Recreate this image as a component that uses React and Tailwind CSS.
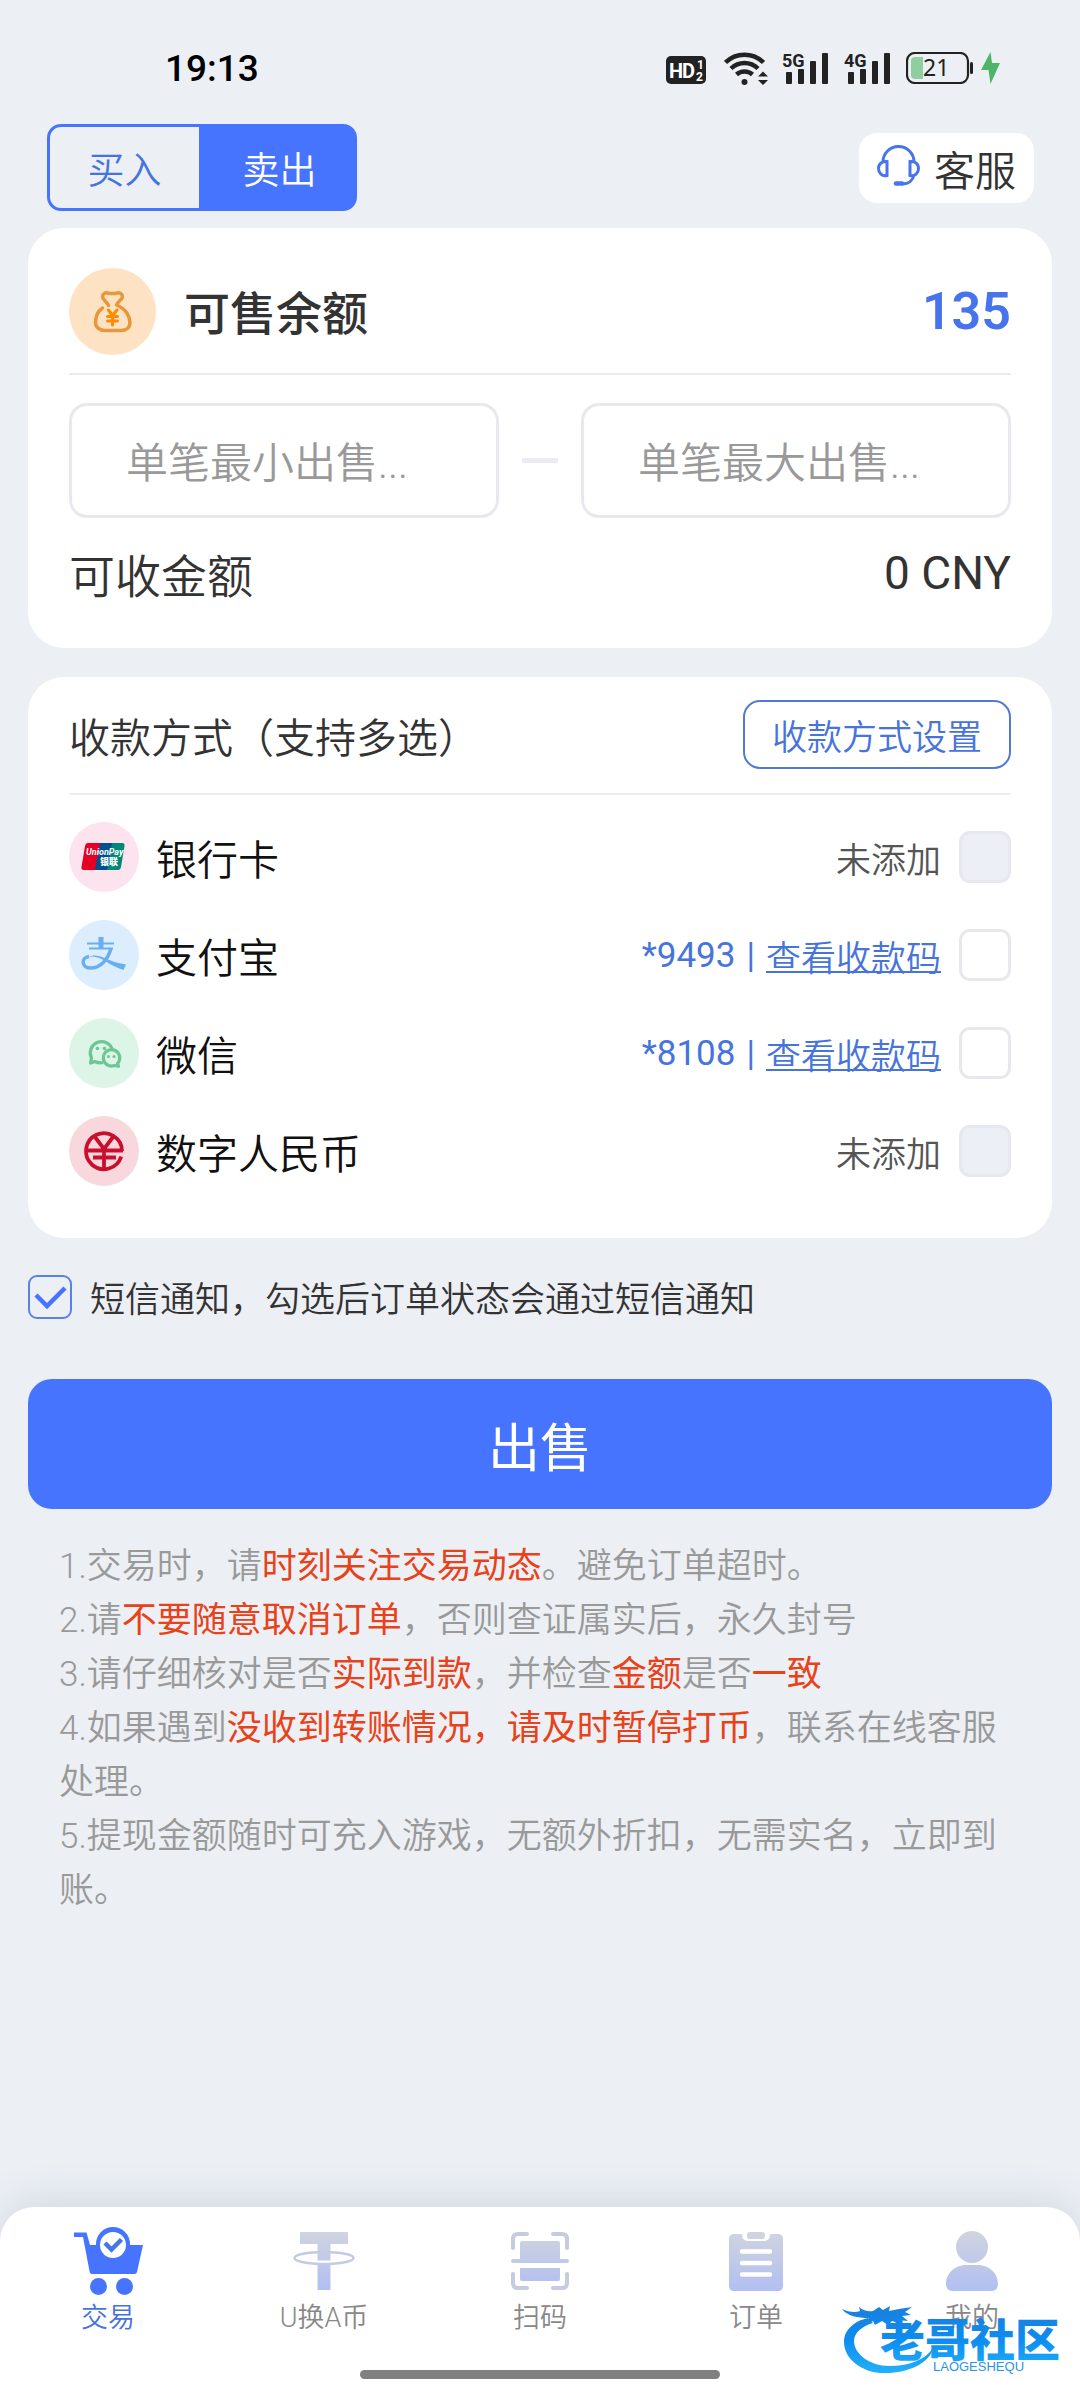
import { useState } from "react";

const METHODS = [
  { id: "bank", name: "银行卡", Icon: UnionPayIcon, tone: "bg-[#fde3ee]" },
  { id: "alipay", name: "支付宝", Icon: AlipayIcon, tone: "bg-[#dceefe]", tail: "*9493" },
  { id: "wechat", name: "微信", Icon: WechatIcon, tone: "bg-[#dcf5e6]", tail: "*8108" },
  { id: "ecny", name: "数字人民币", Icon: EcnyIcon, tone: "bg-[#f8d8dc]" },
];

const TABS = [
  { id: "trade", label: "交易", Icon: CartIcon },
  { id: "swap", label: "U换A币", Icon: TetherIcon },
  { id: "scan", label: "扫码", Icon: ScanIcon },
  { id: "orders", label: "订单", Icon: OrdersIcon },
  { id: "me", label: "我的", Icon: UserIcon },
];

export default function App() {
  const [side, setSide] = useState("sell");
  const [picked, setPicked] = useState([]);
  const [sms, setSms] = useState(true);

  function toggle(id) {
    setPicked((list) => (list.includes(id) ? list.filter((x) => x !== id) : [...list, id]));
  }

  return (
    <div className="min-h-screen flex flex-col bg-[#ecf0f5] text-[#333] font-[Roboto,'Noto_Sans_CJK_SC',sans-serif]">
      <StatusBar />

      <header className="flex items-center justify-between pl-[47px] pr-[46px]">
        <div className="flex w-[310px] h-[87px] text-[37px] font-[350]">
          <SideButton className="rounded-l-[14px]" active={side === "buy"} onClick={() => setSide("buy")}>买入</SideButton>
          <SideButton className="rounded-r-[14px]" active={side === "sell"} onClick={() => setSide("sell")}>卖出</SideButton>
        </div>
        <button type="button" className="flex items-center gap-3.5 h-[70px] px-[18px] rounded-[18px] bg-white text-[41px] leading-[normal] font-[350]">
          <HeadsetIcon />
          客服
        </button>
      </header>

      <main className="px-7">
        <section className="mt-[17px] px-[41px] pt-10 pb-[42px] rounded-[36px] bg-white">
          <div className="flex items-center pb-[18px] border-b-2 border-[#ebebeb]">
            <span className="size-[87px] rounded-full bg-[#fde3c3]">
              <MoneyBagIcon />
            </span>
            <h1 className="ml-7 pt-1 text-[46px] leading-none font-medium">可售余额</h1>
            <span className="ml-auto text-[52px] leading-none font-semibold text-[#4774ec]">135</span>
          </div>
          <div className="mt-7 flex items-center gap-[23px]">
            <AmountInput label="单笔最小出售" />
            <span className="w-9 h-[5px] shrink-0 bg-[#ebebf4]" />
            <AmountInput label="单笔最大出售" />
          </div>
          <div className="mt-[22px] flex items-center justify-between text-[46px]">
            <span className="leading-[normal] font-[350]">可收金额</span>
            <span className="leading-none">0 CNY</span>
          </div>
        </section>

        <section className="mt-[29px] px-[41px] pt-[23px] pb-[38px] rounded-[36px] bg-white">
          <div className="flex items-center justify-between pb-6 border-b-2 border-[#ededed]">
            <h2 className="text-[41px] leading-[normal] font-[350]">收款方式（支持多选）</h2>
            <button type="button" className="h-[69px] px-[27px] rounded-[17px] border-2 border-[#5279d8] text-[35px] leading-[normal] font-[350] text-[#4774dc]">
              收款方式设置
            </button>
          </div>
          <ul className="mt-[13px]">
            {METHODS.map((m) => (
              <MethodRow key={m.id} {...m} checked={picked.includes(m.id)} onToggle={() => toggle(m.id)} />
            ))}
          </ul>
        </section>

        <label className="mt-[33px] flex items-center gap-[18px] text-[35px] leading-[normal] font-[350]">
          <span className="relative size-[44px] shrink-0">
            <input
              type="checkbox"
              checked={sms}
              onChange={(e) => setSms(e.target.checked)}
              className="block size-full appearance-none rounded-[9px] border-2 border-[#5b80e6]"
            />
            {sms && <TickIcon />}
          </span>
          短信通知，勾选后订单状态会通过短信通知
        </label>

        <button type="button" className="mt-[57px] w-full h-[130px] rounded-[24px] bg-[#4774ff] text-[52px] leading-[normal] text-white">
          出售
        </button>

        <ol className="mt-[31px] px-[31px] text-[35px] leading-[54px] font-[350] text-[#999]">
          <li>1.交易时，请<Hot>时刻关注交易动态</Hot>。避免订单超时。</li>
          <li>2.请<Hot>不要随意取消订单</Hot>，否则查证属实后，永久封号</li>
          <li>3.请仔细核对是否<Hot>实际到款</Hot>，并检查<Hot>金额</Hot>是否<Hot>一致</Hot></li>
          <li>4.如果遇到<Hot>没收到转账情况，请及时暂停打币</Hot>，联系在线客服处理。</li>
          <li>5.提现金额随时可充入游戏，无额外折扣，无需实名，立即到账。</li>
        </ol>
      </main>

      <TabBar />
    </div>
  );
}

function SideButton({ active, onClick, className, children }) {
  return (
    <button
      type="button"
      onClick={onClick}
      className={`flex-1 border-3 border-[#4774ff] leading-[normal] ${className} ${active ? "bg-[#4774ff] text-white" : "text-[#4774dc]"}`}
    >
      {children}
    </button>
  );
}

function AmountInput({ label }) {
  return (
    <input
      type="text"
      inputMode="decimal"
      aria-label={label}
      placeholder={`${label}...`}
      className="flex-1 min-w-0 h-[115px] px-[54px] pt-1.5 rounded-[18px] border-3 border-[#e8e8ef] text-[42px] font-[350] placeholder:text-[#999] outline-none"
    />
  );
}

function Hot({ children }) {
  return <span className="font-normal text-[#e8421a]">{children}</span>;
}

function MethodRow({ id, name, Icon, tone, tail, checked, onToggle }) {
  return (
    <li className="flex items-center h-[98px]">
      <span className={`size-[70px] rounded-full ${tone}`}>
        <Icon />
      </span>
      <label htmlFor={id} className="ml-[17px] text-[41px] leading-[normal] font-[350] text-[#111]">{name}</label>
      <span className="ml-auto mr-[18px] flex items-center gap-[11px] text-[35px] font-[350]">
        {tail ? (
          <>
            <span className="leading-none font-normal text-[#4774dc]">{tail}</span>
            <span className="leading-none font-normal text-[#4774dc]">|</span>
            <a href="#qr" className="leading-[normal] text-[#4774dc] underline underline-offset-0 decoration-2 [text-decoration-skip-ink:none]">查看收款码</a>
          </>
        ) : (
          <span className="leading-[normal] text-[#555]">未添加</span>
        )}
      </span>
      <input
        id={id}
        type="checkbox"
        disabled={!tail}
        checked={checked}
        onChange={onToggle}
        className="size-[52px] appearance-none rounded-[11px] border-3 border-[#e6e7ef] bg-white checked:bg-[#4774ff] disabled:bg-[#eceff6]"
      />
    </li>
  );
}

function StatusBar() {
  return (
    <div className="flex items-start justify-between h-[124px] pt-[50px] pl-[165px] pr-20 text-[#222]">
      <time className="text-[37px] leading-[38px] font-medium text-black">19:13</time>
      <div className="flex items-center h-9">
        <svg width="40" height="28" viewBox="0 0 40 28" className="mt-1 mr-[18px]">
          <rect width="40" height="28" rx="5" fill="#222" />
          <text x="3" y="22" fontSize="20" fontWeight="700" fill="#fff" fontFamily="Roboto">H</text>
          <text x="16" y="22" fontSize="20" fontWeight="700" fill="#fff" fontFamily="Roboto">D</text>
          <text x="31" y="13" fontSize="12" fontWeight="700" fill="#fff" fontFamily="Roboto">1</text>
          <text x="30" y="25" fontSize="12" fontWeight="700" fill="#fff" fontFamily="Roboto">2</text>
        </svg>
        <svg width="44" height="34" viewBox="0 0 44 34" fill="none" stroke="#222" strokeWidth="4.500" className="mr-[14px]">
          <path d="M1.500 11.500a27 27 0 0 1 38 0M7 17.500a19.500 19.500 0 0 1 27 0M12.500 23.500a12 12 0 0 1 16 0" />
          <circle cx="20.500" cy="31" r="3" fill="#222" stroke="none" />
          <path d="M34 25.500 39 20.500 44 25.500zM34 29 39 34 44 29z" fill="#222" stroke="none" />
        </svg>
        <SignalIcon label="5G" />
        <SignalIcon label="4G" />
        <svg width="67" height="32" viewBox="0 0 67 32" className="mr-2">
          <rect x="1" y="1" width="61" height="30" rx="8" fill="none" stroke="#222" strokeWidth="2.200" />
          <path d="M9 5h8v22H9a4 4 0 0 1-4-4V9a4 4 0 0 1 4-4z" fill="#8fcf9f" />
          <rect x="64" y="10" width="3" height="12" rx="1.500" fill="#222" />
          <text x="17" y="24" fontSize="23" fill="#222" fontFamily="Noto Sans">21</text>
        </svg>
        <svg width="19" height="32" viewBox="0 0 19 32" fill="#4cb568">
          <path d="M9.500 0 0 18h7.500L9.500 32 19 11h-8z" />
        </svg>
      </div>
    </div>
  );
}

function SignalIcon({ label }) {
  return (
    <svg width="46" height="38" viewBox="0 0 46 38" fill="#222" className="mr-4">
      <text x="0" y="18" fontSize="18" fontWeight="700" fontFamily="Roboto">{label}</text>
      <rect x="4" y="23" width="6" height="12" rx="1" />
      <rect x="16" y="20" width="6" height="15" rx="1" />
      <rect x="28" y="12" width="6" height="23" rx="1" />
      <rect x="40" y="4" width="6" height="31" rx="1" />
    </svg>
  );
}

function TabBar() {
  return (
    <nav className="relative mt-auto h-[193px] flex flex-col rounded-t-[34px] bg-white shadow-[0_-6px_40px_rgba(60,70,110,0.14)]">
      <ul className="grid grid-cols-5 pt-[19px]">
        {TABS.map(({ id, label, Icon }) => (
          <li key={id}>
            <a
              href={`#${id}`}
              className={`flex flex-col items-center text-[27px] leading-[36px] font-[350] ${id === "trade" ? "text-[#4774dc]" : "text-[#888]"}`}
            >
              <span className="mb-1 flex items-center justify-center h-[70px]"><Icon /></span>
              {label}
            </a>
          </li>
        ))}
      </ul>
      <span className="mt-auto mb-[21px] mx-auto w-[360px] h-[9px] rounded-full bg-[#808080]" />
      <Watermark />
    </nav>
  );
}

function Watermark() {
  return (
    <div className="absolute right-4 bottom-6 pointer-events-none">
      <svg width="222" height="72" viewBox="0 0 222 72">
        <defs>
          <linearGradient id="wm" x1="0" y1="0" x2="0" y2="72" gradientUnits="userSpaceOnUse">
            <stop offset="0" stopColor="#1a7fdc" />
            <stop offset="0.500" stopColor="#0d8df0" />
            <stop offset="1" stopColor="#25b4fb" />
          </linearGradient>
        </defs>
        <g fill="url(#wm)">
          <path d="M26 14C12 17 2 26 2 38c0 18 20 32 42 31 22 0 44-10 47-25-8 12-24 18-44 18C28 62 12 50 12 37c0-8 8-15 19-18z" />
          <path d="M0 5c6 3 13 4 18 2l-1-4c3 3 9 5 14 4l6-4 4 3 7-4-1 5 10-2 13-2-7 5 6 3-9 1 6 5-10-1 3 4-9-3-4 4-6-4-7 4-2-4-6 3 2-6C16 14 5 12 0 5z" />
          <text x="38" y="53" fontSize="45" fontWeight="900" fontFamily="Noto Sans CJK SC">老哥社区</text>
        </g>
        <text x="91" y="67" fontSize="13" fill="#2a93ea" fontFamily="Liberation Sans">LAOGESHEQU</text>
      </svg>
    </div>
  );
}

function TickIcon() {
  return (
    <svg viewBox="0 0 44 44" className="absolute inset-0" fill="none" stroke="#4774ff" strokeWidth="4.500">
      <path d="M8 20l11 11 18-18" />
    </svg>
  );
}

function HeadsetIcon() {
  return (
    <svg width="43" height="41" viewBox="0 0 43 41" fill="none" stroke="#4774ec" strokeWidth="3" className="mb-1">
      <path d="M6 17a15.500 15.500 0 0 1 31 0" />
      <path d="M10 16.500v14C5 31.500 1.500 28 1.500 23.500S5 16 10 16.500zM33 16.500v14c5 1 8.500-2.500 8.500-7S38 16 33 16.500z" />
      <path d="M37 30c-1 5-5 9-12 9" />
      <path d="M19 38.500h6" strokeWidth="4.500" strokeLinecap="round" />
    </svg>
  );
}

function MoneyBagIcon() {
  return (
    <svg viewBox="0 0 87 87" fill="none" stroke="#e8973a" strokeWidth="3.500" strokeLinecap="round" strokeLinejoin="round">
      <path d="M39.500 37.500c-1-3-6-6-6-9 0-3 3-4 5-3.500 3 .7 7 .7 10 0 2-.5 5 .5 5 3.500 0 3-5 5-6 8.500 10 4 13.500 12 13.500 17.500 0 5-4 8-9 8H36c-5 0-9.500-3-9.500-8 0-5 2-11 7-14.500" />
      <path d="M39.500 42l4 5.500 4.500-5.500M43.500 47.500V57M38.500 48.500h10M38.500 53h10" stroke="#ff8a00" strokeWidth="3" />
    </svg>
  );
}

function UnionPayIcon() {
  return (
    <svg viewBox="0 0 70 70">
      <path d="M19 21h13l-5 27H15c-2 0-3-1-2.500-3L16 24c.5-2 1.500-3 3-3z" fill="#e60023" />
      <path d="M31 21h13l-5 27H26z" fill="#00508e" />
      <path d="M43 21h10c2 0 3 1 2.500 3L52 45c-.5 2-1.500 3-3 3H38z" fill="#00877c" />
      <text x="17" y="33" fontSize="9" fontWeight="700" fontStyle="italic" fill="#fff" fontFamily="Roboto">UnionPay</text>
      <text x="31" y="43" fontSize="9" fontWeight="900" fill="#fff" fontFamily="Noto Sans CJK SC">银联</text>
    </svg>
  );
}

function AlipayIcon() {
  return (
    <svg viewBox="0 0 70 70" fill="none" stroke="#68aef0" strokeWidth="2">
      <path d="M18 23.500h27M20 28.500h24" />
      <path d="M32 17v11" strokeWidth="5" />
      <path d="M42 28.500C39 39 32 48 21.500 48 12 48 12 37.500 20 36.500" strokeWidth="3.500" />
      <path d="M19 37.500c6-3 15 2 21 6 5 3 10 5 14.500 6.500L57 44.500c-7-1-13-3-18-5-7-3-14-6-20-2z" fill="#68aef0" stroke="none" />
    </svg>
  );
}

function WechatIcon() {
  return (
    <svg viewBox="0 0 70 70" fill="none" stroke="#6cc796" strokeWidth="3.200" strokeLinejoin="round">
      <path d="M34 44.500a11.500 11.500 0 0 1-8-1l-4.500 1.500 1-5A11.300 11.300 0 1 1 43.500 32" />
      <path d="M48.500 45.500a8.200 8.200 0 1 0-3 2l4 .8z" />
      <g fill="#6cc796" stroke="none">
        <circle cx="28.500" cy="30.500" r="1.800" />
        <circle cx="35.500" cy="30.500" r="1.800" />
        <circle cx="39.500" cy="38.500" r="1.500" />
        <circle cx="45" cy="38.500" r="1.500" />
      </g>
    </svg>
  );
}

function EcnyIcon() {
  return (
    <svg viewBox="0 0 70 70" fill="none" stroke="#c8102e" strokeWidth="3.800">
      <path d="M53 35a18 18 0 1 0-.8 5.500" />
      <path d="M17 34.500h37M24 41.500h23M26 21l9 12 9-12M35 33v20" />
    </svg>
  );
}

function CartIcon() {
  return (
    <svg width="69" height="68" viewBox="0 0 69 68">
      <path d="M0 5.500h12.500L16 18h6.500a17 17 0 0 1 33.500 0h13L63 45q-.5 2-2.500 2H18q-2 0-2.300-2L9 10H0z" fill="#4774ff" />
      <circle cx="39" cy="17" r="17" fill="#4774ff" />
      <circle cx="39" cy="18" r="13" fill="#fff" />
      <path d="M31 16l6.500 6.500L47.500 12.500" fill="none" stroke="#4774ec" strokeWidth="4.500" />
      <circle cx="24.500" cy="59.500" r="8.500" fill="#4774ff" />
      <circle cx="50.500" cy="59.500" r="8.500" fill="#4774ff" />
    </svg>
  );
}

// shared grey-to-blue fill of the inactive tabs
function Fade({ id, height }) {
  return (
    <defs>
      <linearGradient id={id} x1="0" y1="0" x2="0" y2={height} gradientUnits="userSpaceOnUse">
        <stop offset="0" stopColor="#cfd4df" />
        <stop offset="1" stopColor="#b1bff2" />
      </linearGradient>
    </defs>
  );
}

function TetherIcon() {
  return (
    <svg width="62" height="58" viewBox="0 0 62 58">
      <Fade id="tether" height="58" />
      <ellipse cx="31" cy="26" rx="29.500" ry="6" fill="none" stroke="#c2cae6" strokeWidth="2.500" />
      <path d="M7 0h48v12H37.500v16.500h-13V12H7z" fill="url(#tether)" />
      <path d="M24.500 33h13v25h-13z" fill="url(#tether)" />
    </svg>
  );
}

function ScanIcon() {
  return (
    <svg width="58" height="58" viewBox="0 0 58 58">
      <Fade id="scan" height="58" />
      <path
        d="M16 2H7q-5 0-5 5v9M42 2h9q5 0 5 5v9M2 42v9q0 5 5 5h9M56 42v9q0 5-5 5h-9"
        fill="none"
        stroke="#c6cbdf"
        strokeWidth="4"
        strokeLinecap="round"
      />
      <path d="M9 11q0-2 2-2h36q2 0 2 2v16h7q2 0 2 2t-2 2H2q-2 0-2-2t2-2h7zM9 36h40v11q0 2-2 2H11q-2 0-2-2z" fill="url(#scan)" />
    </svg>
  );
}

function OrdersIcon() {
  return (
    <svg width="54" height="59" viewBox="0 0 54 59">
      <Fade id="orders" height="59" />
      <path d="M5 2h8q0 7 6 7h16q6 0 6-7h8q5 0 5 5v47q0 5-5 5H5q-5 0-5-5V7q0-5 5-5z" fill="url(#orders)" />
      <rect x="18" width="18" height="7" rx="3" fill="#cfd4df" />
      <path d="M13 19.500h28M13 31h28M13 42.500h28" stroke="#fff" strokeWidth="4.500" strokeLinecap="round" />
    </svg>
  );
}

function UserIcon() {
  return (
    <svg width="52" height="60" viewBox="0 0 52 60">
      <Fade id="user" height="60" />
      <path d="M26 0a16 16 0 1 1 0 32 16 16 0 0 1 0-32zM20 34h12c12 0 20 9 20 19q0 7-7 7H7q-7 0-7-7c0-10 8-19 20-19z" fill="url(#user)" />
    </svg>
  );
}
